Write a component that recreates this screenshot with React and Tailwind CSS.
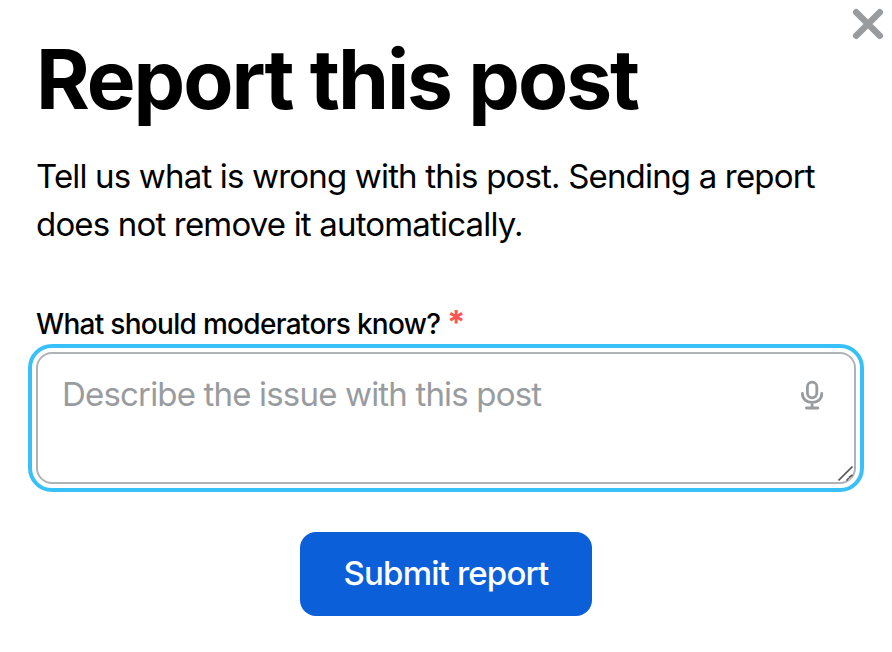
import { useId } from 'react'

function CloseIcon() {
  return (
    <svg width="32" height="32" viewBox="0 0 32 32" fill="none" stroke="currentColor" strokeWidth="6.5" strokeLinecap="round" aria-hidden="true">
      <path d="M4.2 4.2l23.6 23.6M27.8 4.2L4.2 27.8" />
    </svg>
  )
}

function MicIcon() {
  return (
    <svg width="24" height="30" viewBox="0 0 24 30" fill="none" stroke="currentColor" strokeWidth="2.8" strokeLinecap="round" strokeLinejoin="round" aria-hidden="true">
      <rect x="7.4" y="2.2" width="9.4" height="15.6" rx="4.7" />
      <path d="M2.4 13.5c0 5.6 4.2 9 9.7 9s9.7-3.4 9.7-9M12.1 22.5v5.3M6.4 28h11.4" />
    </svg>
  )
}

function ResizeGrip() {
  return (
    <svg width="16" height="16" viewBox="0 0 16 16" fill="none" strokeWidth="1.6" className="pointer-events-none absolute right-0.5 bottom-0.5" aria-hidden="true">
      <path d="M0.5 14.5l14-14M8.5 14.5l2.5-2.5M11 11.5l3.5-2.5" stroke="#555555" />
      <path d="M10.5 14.5l4-3.5" stroke="#cccccc" />
    </svg>
  )
}

export default function App() {
  const fieldId = useId()

  return (
    <main className="relative min-h-screen bg-white px-9 pt-9 pb-9 font-['Inter',sans-serif] text-black">
      <button type="button" aria-label="Close" className="absolute top-2 right-2 text-[#999c9f]">
        <CloseIcon />
      </button>

      <h1 className="text-[82px] leading-[88px] font-bold tracking-tight">Report this post</h1>

      <p className="mt-7 text-[33px] leading-12 tracking-tight">
        Tell us what is wrong with this post. Sending a report does not remove it automatically.
      </p>

      <form className="mt-14" onSubmit={(e) => e.preventDefault()}>
        <label htmlFor={fieldId} className="block text-[28px] leading-10 font-medium tracking-tight">
          What should moderators know? <span className="text-[33px] leading-none font-bold text-[#ff5252]">*</span>
        </label>

        <div className="relative mt-2">
          <textarea
            id={fieldId}
            required
            placeholder="Describe the issue with this post"
            className="block h-33 w-full resize-none rounded-2xl border-2 border-[#afb3b6] px-6 py-5 text-[33px] leading-10 tracking-tight outline-4 outline-offset-4 outline-[#38c0f8] placeholder:text-[#999c9f]"
          />
          <button type="button" aria-label="Dictate" className="absolute top-7 right-8 text-[#999c9f]">
            <MicIcon />
          </button>
          <ResizeGrip />
        </div>

        <button type="submit" className="mx-auto mt-12 block h-21 rounded-2xl bg-[#0b5fd9] px-11 text-[33px] font-medium tracking-tight text-white">
          Submit report
        </button>
      </form>
    </main>
  )
}
